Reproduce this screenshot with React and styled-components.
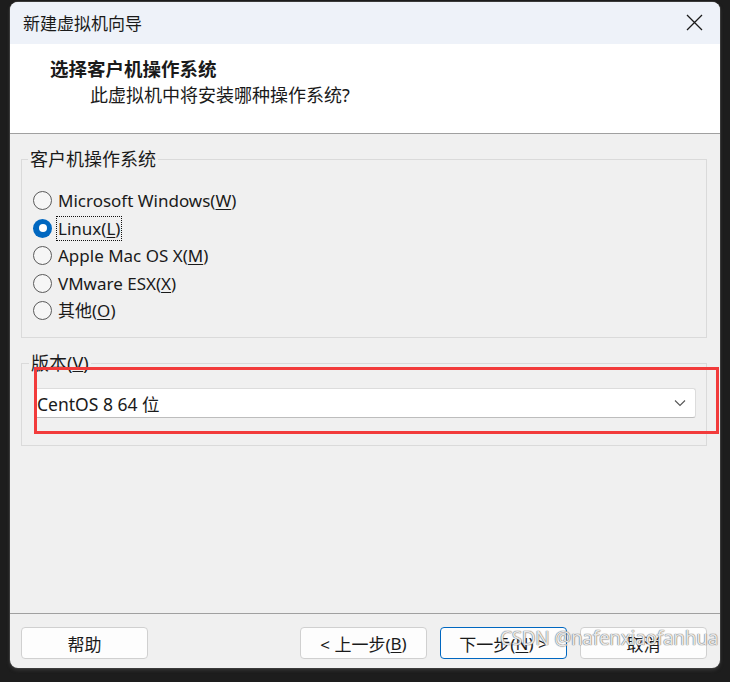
import React from 'react'
import styled, { createGlobalStyle } from 'styled-components'

const GlobalStyle = createGlobalStyle`
  html, body {
    margin: 0;
    padding: 0;
    background: #1d1d1d;
  }
  body {
    width: 730px;
    height: 682px;
    overflow: hidden;
    font-family: "Noto Sans", "Noto Sans CJK SC", sans-serif;
    color: #1a1a1a;
  }
`

const OS_LIST = [
  { label: 'Microsoft Windows(', key: 'W' },
  { label: 'Linux(', key: 'L' },
  { label: 'Apple Mac OS X(', key: 'M' },
  { label: 'VMware ESX(', key: 'X' },
  { label: '其他(', key: 'O' }
]

const CloseIcon = () => (
  <svg width="17" height="17" viewBox="0 0 17 17">
    <path d="M1 1 L16 16 M16 1 L1 16" stroke="#1a1a1a" strokeWidth="1.3" fill="none" />
  </svg>
)

const Chevron = () => (
  <svg width="12" height="8" viewBox="0 0 12 8">
    <path d="M1 1.5 L6 6.5 L11 1.5" stroke="#555" strokeWidth="1.1" fill="none" />
  </svg>
)

export default function App() {
  const selected = 1

  return (
    <>
      <GlobalStyle />
      <Page>
        <Window>
          <TitleBar>
            <Title>新建虚拟机向导</Title>
            <CloseButton><CloseIcon /></CloseButton>
          </TitleBar>
          <Header>
            <HeaderTitle>选择客户机操作系统</HeaderTitle>
            <HeaderSub>此虚拟机中将安装哪种操作系统?</HeaderSub>
          </Header>
          <Body>
            <Group>
              <Legend>客户机操作系统</Legend>
              <RadioList>
                {OS_LIST.map((os, i) => (
                  <RadioRow key={os.key}>
                    <Radio $checked={i === selected} />
                    <RadioLabel $focused={i === selected}>
                      {os.label}<u>{os.key}</u>)
                    </RadioLabel>
                  </RadioRow>
                ))}
              </RadioList>
            </Group>
            <VersionGroup>
              <Legend>版本(<u>V</u>)</Legend>
              <Select>
                <span>CentOS 8 64 位</span>
                <Chevron />
              </Select>
            </VersionGroup>
          </Body>
          <Footer>
            <Button>帮助</Button>
            <Spacer />
            <Button>&lt; 上一步(<u>B</u>)</Button>
            <Button $primary>下一步(<u>N</u>) &gt;</Button>
            <Button>取消</Button>
          </Footer>
          <Highlight />
          <Watermark>CSDN @nafenxiaofanhua</Watermark>
        </Window>
      </Page>
    </>
  )
}

const Page = styled.div`
  padding: 2px 10px 0 10px;
`
const Window = styled.div`
  position: relative;
  width: 710px;
  height: 666px;
  background: #f0f0f0;
  border-radius: 8px;
  overflow: hidden;
  box-shadow: 0 0 0 1px #3a3a3a, 0 2px 3px 1px #2e2e2e;
  display: flex;
  flex-direction: column;
`
const TitleBar = styled.div`
  height: 42px;
  background: #eef2f9;
  display: flex;
  align-items: center;
  justify-content: space-between;
  padding: 0 17px 0 13px;
`
const Title = styled.div`
  font-size: 17px;
  margin-top: -1px;
`
const CloseButton = styled.div`
  display: flex;
  align-items: center;
  margin-top: -1px;
`
const Header = styled.div`
  height: 90px;
  background: #ffffff;
  border-bottom: 1px solid #a0a0a0;
  padding: 12px 0 0 40px;
  box-sizing: border-box;
`
const HeaderTitle = styled.div`
  font-size: 18.5px;
  font-weight: 700;
  line-height: 26px;
`
const HeaderSub = styled.div`
  font-size: 18px;
  line-height: 26px;
  margin: 0 0 0 40px;
`
const Body = styled.div`
  flex: 1;
  padding: 14px 13px 0 11px;
  border-bottom: 1px solid #a0a0a0;
  display: flex;
  flex-direction: column;
`
const Group = styled.fieldset`
  margin: 0;
  border: 1px solid #dadada;
  padding: 17px 0 13px 11px;
  height: 190px;
  box-sizing: border-box;
`
const VersionGroup = styled(Group)`
  margin-top: 14px;
  height: 94px;
  padding: 14px 10px 0 12px;
`
const Legend = styled.legend`
  font-size: 18px;
  padding: 0 2px;
  margin-left: -5px;
  line-height: 22px;
`
const RadioList = styled.div`
  display: flex;
  flex-direction: column;
`
const RadioRow = styled.div`
  height: 27.5px;
  display: flex;
  align-items: center;
  gap: 5px;
`
const Radio = styled.span`
  width: 19px;
  height: 19px;
  box-sizing: border-box;
  border-radius: 50%;
  flex: none;
  border: ${p => (p.$checked ? 'none' : '1px solid #5a5a5a')};
  background: ${p => (p.$checked ? '#0067c0' : '#f6f6f6')};
  display: flex;
  align-items: center;
  justify-content: center;
  &::after {
    content: '';
    display: ${p => (p.$checked ? 'block' : 'none')};
    width: 8px;
    height: 8px;
    border-radius: 50%;
    background: #ffffff;
  }
`
const RadioLabel = styled.span`
  font-size: 17px;
  line-height: 23px;
  padding: 0 1px;
  outline: ${p => (p.$focused ? '1px dotted #111' : 'none')};
  u { text-underline-offset: 2px; }
`
const Select = styled.div`
  height: 30px;
  background: #ffffff;
  border: 1px solid #dcdcdc;
  border-bottom-color: #bdbdbd;
  border-radius: 3px;
  box-sizing: border-box;
  display: flex;
  align-items: center;
  justify-content: space-between;
  padding: 0 9px 0 2px;
  font-size: 17.5px;
`
const Footer = styled.div`
  height: 54px;
  display: flex;
  align-items: flex-start;
  padding: 13px 13px 0 11px;
  gap: 13px;
  box-sizing: border-box;
`
const Spacer = styled.div`
  flex: 1;
`
const Button = styled.div`
  width: 127px;
  height: 32px;
  box-sizing: border-box;
  background: #fdfdfd;
  border: 1px solid ${p => (p.$primary ? '#0067c0' : '#d0d0d0')};
  border-radius: 4px;
  display: flex;
  align-items: center;
  justify-content: center;
  font-size: 17px;
  u { text-underline-offset: 2px; }
`
const Highlight = styled.div`
  position: absolute;
  left: 24px;
  top: 365px;
  width: 685px;
  height: 67px;
  box-sizing: border-box;
  border: 3px solid #f23b3b;
  pointer-events: none;
`
const Watermark = styled.div`
  position: absolute;
  right: 2px;
  bottom: 17px;
  font-size: 19px;
  color: rgba(255, 255, 255, 0.85);
  text-shadow: 0 0 1px #666, 0 0 1px #666;
  letter-spacing: -0.3px;
`
